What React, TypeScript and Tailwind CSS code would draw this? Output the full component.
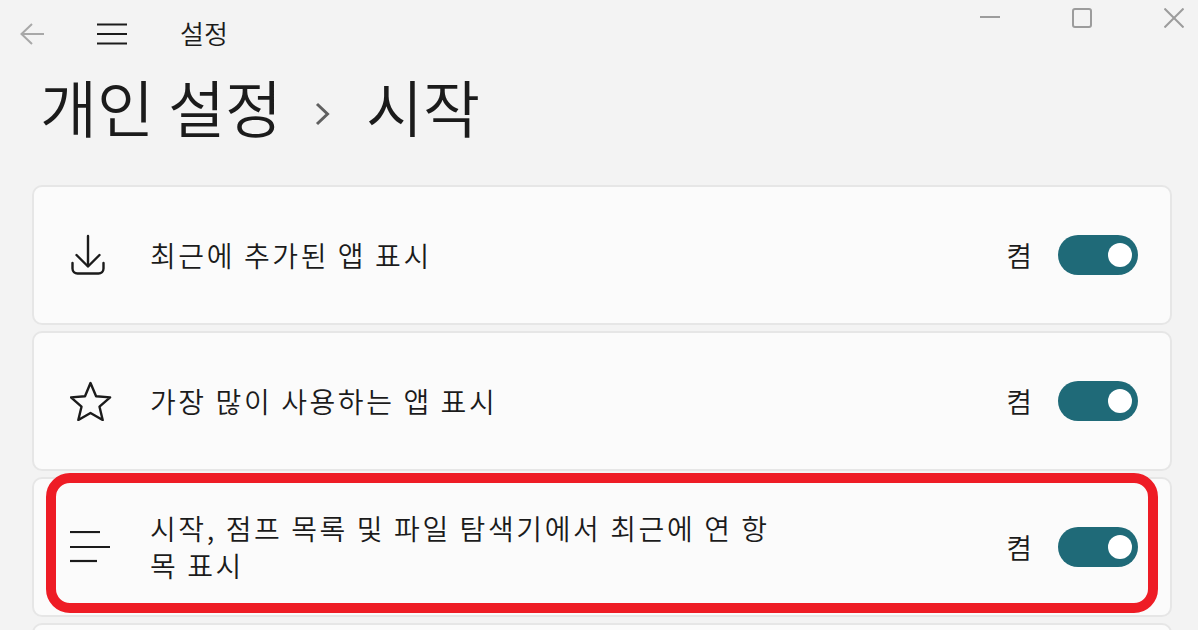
const fontStack = "font-['Noto_Sans_CJK_KR','Noto_Sans',sans-serif]"

function DownloadIcon() {
  return (
    <svg className="ml-[1px]" width="34" height="42" viewBox="0 0 34 42" fill="none" stroke="#1b1b1b" strokeWidth="2.4" strokeLinecap="round" strokeLinejoin="round">
      <path d="M17 2v30" />
      <path d="M5.5 21L17 32.5 28.5 21" />
      <path d="M1.5 29v5.5a5 5 0 0 0 5 5h21a5 5 0 0 0 5-5V29" />
    </svg>
  )
}

function StarIcon() {
  return (
    <svg width="42" height="40" viewBox="0 0 42 40" fill="none" stroke="#1b1b1b" strokeWidth="2.4" strokeLinejoin="round">
      <path d="M20.5 2l5.6 13.2 14 1.2-10.6 9.3 3.2 13.3-12.2-7-12.2 7 3.2-13.3L1 16.4l14-1.2z" />
    </svg>
  )
}

function RecentIcon() {
  return (
    <svg width="40" height="32" viewBox="0 0 40 32" fill="none" stroke="#1b1b1b" strokeWidth="2.2">
      <path d="M0 1h30" />
      <path d="M0 16h40" />
      <path d="M0 30h27" />
    </svg>
  )
}

function Toggle() {
  return (
    <div className="flex h-10 w-20 items-center justify-end rounded-full bg-[#1f6a78] pr-[6px]">
      <div className="h-6 w-6 rounded-full bg-white" />
    </div>
  )
}

function SettingRow({ icon, label }: { icon: React.ReactNode; label: React.ReactNode }) {
  return (
    <div className="flex h-[140px] shrink-0 items-center rounded-[10px] border-2 border-[#e6e6e6] bg-[#fbfbfb] pl-[36px] pr-[32px]">
      <div className="flex w-[80px] shrink-0 items-center">{icon}</div>
      <div className="w-[630px] text-[28px] leading-[37px] font-[350] tracking-[2.6px] text-[#1b1b1b]">{label}</div>
      <div className="ml-auto flex items-center gap-[26px]">
        <span className="text-[28px] font-[350] text-[#1b1b1b]">켬</span>
        <Toggle />
      </div>
    </div>
  )
}

export default function App() {
  return (
    <div className={`${fontStack} relative h-[630px] w-[1198px] overflow-hidden bg-[#f3f3f3]`}>
      <div className="flex h-[68px] items-start">
        <svg className="ml-[20px] mt-[23px]" width="25" height="22" viewBox="0 0 25 22" fill="none" stroke="#a8a8a8" strokeWidth="2">
          <path d="M24 11H2" />
          <path d="M12 1L1.5 11 12 21" />
        </svg>
        <svg className="ml-[52px] mt-[23px]" width="30" height="22" viewBox="0 0 30 22" fill="none" stroke="#1b1b1b" strokeWidth="2">
          <path d="M0 1.5h30" />
          <path d="M0 11h30" />
          <path d="M0 20.5h30" />
        </svg>
        <span className="ml-[53px] mt-[15px] text-[26px] leading-[36px] font-[350] text-[#1b1b1b]">설정</span>
        <div className="ml-auto flex items-start pr-[14px] pt-[8px]">
          <div className="mt-[8px] h-[2px] w-5 bg-[#9c9c9c]" />
          <div className="ml-[72px] h-5 w-5 rounded-[3px] border-2 border-[#9c9c9c]" />
          <svg className="ml-[72px]" width="20" height="20" viewBox="0 0 20 20" fill="none" stroke="#9c9c9c" strokeWidth="2">
            <path d="M0.5 0.5l19 19" />
            <path d="M19.5 0.5l-19 19" />
          </svg>
        </div>
      </div>

      <div className="flex h-[76px] items-center pl-[40px] text-[#1b1b1b]">
        <span className="text-[62px] leading-[76px] font-[350]">개인 설정</span>
        <svg className="ml-[33px] mt-[16px]" width="16" height="24" viewBox="0 0 16 24" fill="none" stroke="#606060" strokeWidth="3">
          <path d="M2 2l10.5 10L2 22" />
        </svg>
        <span className="ml-[35px] text-[62px] leading-[76px] font-[350]">시작</span>
      </div>

      <div className="ml-[32px] mt-[41px] flex w-[1140px] flex-col gap-[6px]">
        <SettingRow icon={<DownloadIcon />} label="최근에 추가된 앱 표시" />
        <SettingRow icon={<StarIcon />} label="가장 많이 사용하는 앱 표시" />
        <SettingRow icon={<RecentIcon />} label="시작, 점프 목록 및 파일 탐색기에서 최근에 연 항목 표시" />
        <div className="h-[140px] shrink-0 rounded-[10px] border-2 border-[#e6e6e6] bg-[#fbfbfb]" />
      </div>

      <div className="absolute left-[46px] top-[473px] h-[140px] w-[1112px] rounded-[24px] border-[10px] border-[#ee1c25]" />
    </div>
  )
}
